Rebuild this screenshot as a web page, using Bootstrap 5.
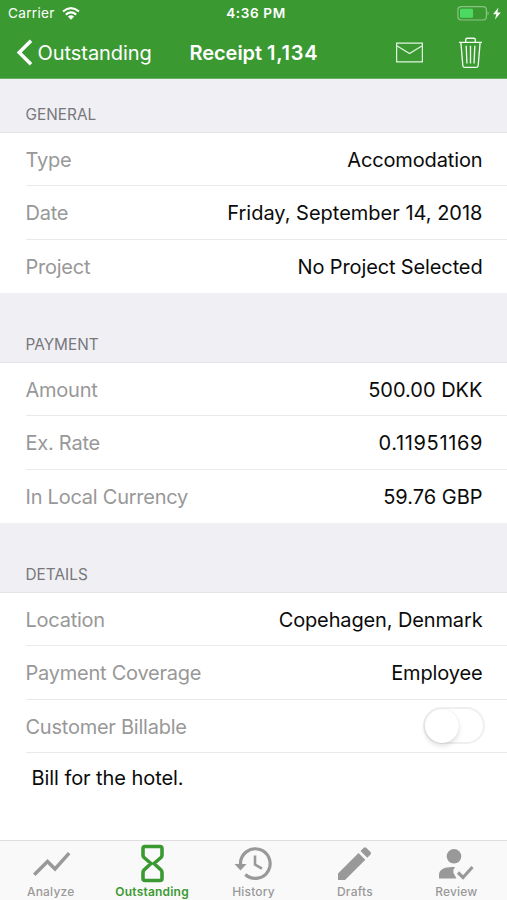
<!DOCTYPE html>
<html lang="en">
<head>
<meta charset="utf-8">
<meta name="viewport" content="width=device-width, initial-scale=1">
<title>Receipt 1,134</title>
<link href="https://cdn.jsdelivr.net/npm/bootstrap@5.3.0/dist/css/bootstrap.min.css" rel="stylesheet">
<style>
body{font-family:Inter,"Liberation Sans",sans-serif;height:900px;overflow:hidden;background:#fff;color:#0b0b0b;font-size:20px;letter-spacing:-.24px}
svg{display:block;flex:none}
.top-area{background:#3b9932;color:#fff;height:79px;border-bottom:1px solid #68b061}
.status-line{height:27px;font-size:13.6px;letter-spacing:.3px;padding:0 5px 0 8px;line-height:27px}
.status-line>div{flex:1 1 0}
.status-time{font-weight:600;letter-spacing:.6px;padding-left:2px}
.title-line{height:51px;padding:0 24px 0 16px}
.back-link{font-size:20px;letter-spacing:-.05px;width:173.5px}
.page-title{font-size:20px;font-weight:600;letter-spacing:-.05px}
.receipt-number{letter-spacing:.75px}
.wifi-icon{margin-left:7px}
.back-icon{margin-right:4.5px}
.trash-icon{margin-left:34px}
.group-title{background:#efeff4;color:#77777c;font-size:15.3px;letter-spacing:.05px;height:70px;padding:0 25.5px 8px;border-bottom:1px solid #e3e3e7;line-height:18px}
.group-first{height:54px}
.field-rows{padding-left:25.5px;height:160px}
.field-row{flex:1 1 0;padding:2px 24.5px 0 0;border-bottom:1px solid #e9e9eb}
.field-rows .field-row:last-child{border-bottom-color:transparent}
.field-rows.details-rows .field-row:last-child{border-bottom-color:#e9e9eb}
.field-name{color:#989898}
.field-value{letter-spacing:-.13px}
.date-value{letter-spacing:0}
.rate-value{letter-spacing:.65px;margin-right:-.6px}
.amount-value{letter-spacing:0}
.toggle{width:62px;height:37px;border:2px solid #efefef;border-radius:20px;margin:-2px -2px 0 0}
.toggle span{display:block;width:34px;height:34px;border-radius:50%;background:#fff;box-shadow:0 3px 5px rgba(0,0,0,.12),0 0 1px rgba(0,0,0,.12)}
.note{padding:11px 31.5px;line-height:28px;letter-spacing:-.07px}
.tabs{height:60px;background:#f9f9f9;border-top:1px solid #dedee0;color:#999;font-size:12px;font-weight:500;letter-spacing:.2px}
.tab-item{flex:1 1 0;line-height:14px}
.tab-item svg{height:44px;width:50px}
.tab-current{color:#3b9932;font-weight:600}
</style>
<script src="https://cdn.jsdelivr.net/npm/bootstrap@5.3.0/dist/js/bootstrap.bundle.min.js"></script>
</head>
<body class="d-flex flex-column">
<header class="top-area">
  <div class="status-line d-flex align-items-center">
    <div class="d-flex align-items-center"><span>Carrier</span>
      <svg class="wifi-icon" width="18" height="13" viewBox="0 0 18 13" fill="none" stroke="#fff" stroke-width="2.1"><path d="M1 4.5Q9-2.3 17 4.5M3.8 7.6q5.2-4.3 10.4 0"/><path d="M5.9 9.6q3.1-2.5 6.2 0L9 12.8z" fill="#fff" stroke="none"/></svg>
    </div>
    <div class="status-time text-center">4:36 PM</div>
    <div class="d-flex justify-content-end">
      <svg width="45" height="15" viewBox="0 0 45 15"><rect x=".9" y=".6" width="28.5" height="13.4" rx="3.5" fill="none" stroke="#8ac484" stroke-width="1.2"/><rect x="3" y="2.8" width="13" height="9" rx="1.2" fill="#4cd964"/><path d="M30.5 5q2.4 2.3 0 4.6z" fill="#8ac484"/><path d="M41.5 1.5l-5.500 6.700h3.300L38 13.500l5.800-6.900h-3.400z" fill="#fff"/></svg>
    </div>
  </div>
  <div class="title-line d-flex align-items-center">
    <div class="back-link d-flex align-items-center"><svg class="back-icon" width="17" height="27" viewBox="0 0 17 27" fill="none" stroke="#fff" stroke-width="3.500"><path d="M15 1.800L3.200 13.500 15 25.200"/></svg><span>Outstanding</span></div>
    <div class="page-title">Receipt <span class="receipt-number">1,134</span></div>
    <div class="d-flex align-items-center ms-auto">
      <svg width="29" height="21" viewBox="0 0 29 22" fill="none" stroke="#e2f4df" stroke-width="1.300"><path d="M1 1.200h27v19.600H1zM1.200 4l13.300 8L27.800 4"/></svg>
      <svg class="trash-icon" width="25" height="34" viewBox="0 0 26 34" fill="none" stroke="#f0faee" stroke-width="1.400"><path d="M1 6h24M8 5.500V3.200Q8 1.700 9.500 1.700h7q1.500 0 1.500 1.500v2.300M3 6l2 24q.2 2 2.200 2h11.600q2 0 2.200-2l2-24M8.500 9.500l.8 18.500M13 9.500V28M17.500 9.500L16.700 28"/></svg>
    </div>
  </div>
</header>
<main class="flex-grow-1">
  <section>
    <div class="group-title group-first d-flex align-items-end">GENERAL</div>
    <div class="field-rows d-flex flex-column">
      <div class="field-row d-flex align-items-center justify-content-between"><span class="field-name">Type</span><span class="field-value">Accomodation</span></div>
      <div class="field-row d-flex align-items-center justify-content-between"><span class="field-name">Date</span><span class="field-value date-value">Friday, September 14, 2018</span></div>
      <div class="field-row d-flex align-items-center justify-content-between"><span class="field-name">Project</span><span class="field-value">No Project Selected</span></div>
    </div>
  </section>
  <section>
    <div class="group-title d-flex align-items-end">PAYMENT</div>
    <div class="field-rows d-flex flex-column">
      <div class="field-row d-flex align-items-center justify-content-between"><span class="field-name">Amount</span><span class="field-value amount-value">500.00 DKK</span></div>
      <div class="field-row d-flex align-items-center justify-content-between"><span class="field-name">Ex. Rate</span><span class="field-value rate-value">0.11951169</span></div>
      <div class="field-row d-flex align-items-center justify-content-between"><span class="field-name">In Local Currency</span><span class="field-value amount-value">59.76 GBP</span></div>
    </div>
  </section>
  <section>
    <div class="group-title d-flex align-items-end">DETAILS</div>
    <div class="field-rows details-rows d-flex flex-column">
      <div class="field-row d-flex align-items-center justify-content-between"><span class="field-name">Location</span><span class="field-value">Copehagen, Denmark</span></div>
      <div class="field-row d-flex align-items-center justify-content-between"><span class="field-name">Payment Coverage</span><span class="field-value">Employee</span></div>
      <div class="field-row d-flex align-items-center justify-content-between"><span class="field-name">Customer Billable</span><div class="toggle" role="switch" aria-checked="false"><span></span></div></div>
    </div>
    <div class="note">Bill for the hotel.</div>
  </section>
</main>
<nav class="tabs d-flex">
  <div class="tab-item d-flex flex-column align-items-center">
    <svg viewBox="0 0 50 44" fill="none" stroke="currentColor" stroke-width="3.500"><path d="M9.500 32.500L21.500 20.500l7.500 7.500L42 13.500" stroke-linecap="square"/></svg><span>Analyze</span></div>
  <div class="tab-item tab-current d-flex flex-column align-items-center">
    <svg viewBox="0 0 50 44" fill="none" stroke="currentColor" stroke-width="3.600" stroke-linejoin="round"><path d="M18 5.500h15q2 0 2 2v6.500q0 1.500-1 2.500L27 22.500l7 6.500q1 1 1 2.500v6q0 2-2 2h-15q-2 0-2-2v-6q0-1.500 1-2.500l7-6.500-7-6q-1-1-1-2.500V7.500q0-2 2-2z"/></svg><span>Outstanding</span></div>
  <div class="tab-item d-flex flex-column align-items-center">
    <svg viewBox="0 0 50 44" fill="none" stroke="currentColor" stroke-width="3.200"><path d="M11.500 24V22.500a14.800 14.800 0 1 1 4.800 11"/><path d="M5.500 23h12l-6 6.500z" fill="currentColor" stroke="none"/><path d="M26 14.500v9l7 4.200" stroke-width="2.600"/></svg><span>History</span></div>
  <div class="tab-item d-flex flex-column align-items-center">
    <svg viewBox="0 0 50 44" fill="currentColor"><path d="M8 32.500L28.500 12l6.800 6.800L15 39H8zM30.500 10l3.300-3.200q1.200-1.200 2.400 0l4.300 4.300q1.200 1.200 0 2.400L37.300 16.800z"/></svg><span>Drafts</span></div>
  <div class="tab-item d-flex flex-column align-items-center">
    <svg viewBox="0 0 50 44" fill="currentColor"><circle cx="23" cy="15.300" r="7.300"/><path d="M8 37.500v-4Q8.500 26 21.500 26h2.500q-2.500 3-1.500 6l3 5.500z"/><path d="M27 31.500l5 5L41.500 26" fill="none" stroke="currentColor" stroke-width="3.200"/></svg><span>Review</span></div>
</nav>
</body>
</html>
